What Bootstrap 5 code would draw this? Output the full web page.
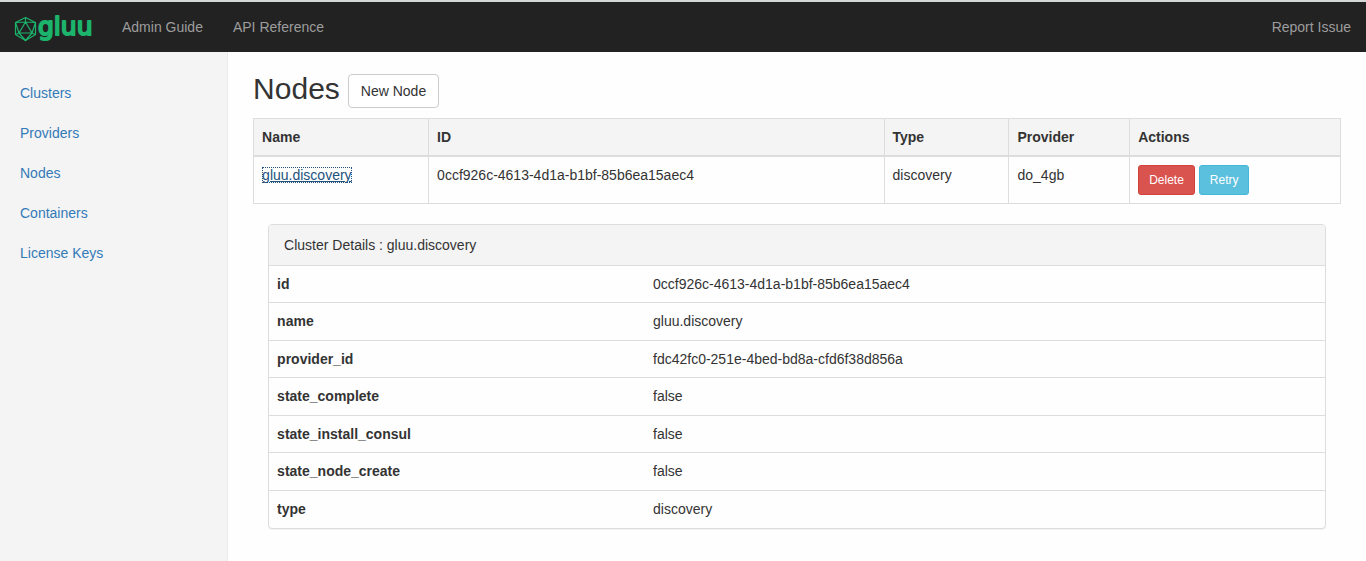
<!DOCTYPE html>
<html lang="en">
<head>
<meta charset="utf-8">
<meta name="viewport" content="width=device-width, initial-scale=1">
<title>Gluu - Nodes</title>
<link href="https://cdn.jsdelivr.net/npm/bootstrap@5.3.0/dist/css/bootstrap.min.css" rel="stylesheet">
<script src="https://cdn.jsdelivr.net/npm/bootstrap@5.3.0/dist/js/bootstrap.bundle.min.js" defer></script>
<style>
  body { font-family: "Liberation Sans", Arial, sans-serif; font-size: 14px; line-height: 20px; color: #333; background: #fefefe; }
  a { color: #337ab7; }
  .topbar { background: #222; border-top: 2px solid #d4d8d8; min-height: 52px; }
  .topbar .nav-link { color: #9d9d9d; padding: 15px; }
  .topbar .nav-link:hover { color: #fff; }
  .brand-logo { display: block; margin-left: 14px; }
  .brand-logo text { font-family: "DejaVu Sans", sans-serif; font-weight: 400; font-size: 25px; }
  .page { min-height: calc(100vh - 52px); }
  .side { width: 16.7%; background: #f4f4f4; border-right: 1px solid #eaeaea; padding-top: 21px; }
  .side .nav-link { color: #337ab7; padding: 10px 20px; }
  .content { padding: 20px 25px; min-width: 0; }
  .heading { margin-bottom: 10px; }
  h1 { font-size: 30px; line-height: 34px; font-weight: 400; }
  .btn { --bs-btn-font-size: 14px; --bs-btn-padding-y: 6px; --bs-btn-padding-x: 12px; --bs-btn-border-radius: 4px; line-height: 20px; }
  .btn-new { --bs-btn-color: #333; --bs-btn-bg: #fff; --bs-btn-border-color: #ccc; --bs-btn-hover-bg: #e6e6e6; margin-top: 2px; }
  .btn-sm { --bs-btn-font-size: 12px; --bs-btn-padding-y: 5px; --bs-btn-padding-x: 10px; --bs-btn-border-radius: 3px; line-height: 18px; }
  .btn-danger { --bs-btn-bg: #d9534f; --bs-btn-border-color: #d43f3a; }
  .btn-info { --bs-btn-color: #fff; --bs-btn-bg: #5bc0de; --bs-btn-border-color: #46b8da; --bs-btn-hover-color: #fff; }
  .table { --bs-table-color: #333; --bs-table-bg: transparent; --bs-table-border-color: #ddd; border-color: #ddd; }
  .table > :not(caption) > * > * { padding: 8px; }
  .nodes thead th { background: #f4f4f4; border-bottom-width: 2px; }
  .col-name { width: 16.1%; } .col-id { width: 41.9%; } .col-type { width: 11.5%; } .col-provider { width: 11.1%; }
  .current { color: #23527c; outline: 1px dotted #23527c; outline-offset: -1px; }
  .details { --bs-card-border-color: #ddd; --bs-card-border-radius: 4px; --bs-card-inner-border-radius: 3px; --bs-card-bg: #fefefe; margin: 20px 15px; box-shadow: 0 1px 1px rgba(0,0,0,.05); }
  .details .card-header { background: #f4f4f4; padding: 10px 15px; border-bottom: 0; }
  .details .table > tbody > tr > * { border-width: 1px 0 0; height: 37px; }
  .details .table > tbody > tr:nth-child(even) > * { height: 38px; }
  .details th { width: 35.6%; }
</style>
</head>
<body>
<nav class="topbar d-flex align-items-center" aria-label="Main">
  <a class="brand-logo" href="#" aria-label="gluu">
    <svg width="77" height="34" viewBox="0 0 77 34" overflow="visible" fill="none" stroke="#1cb46c" stroke-linejoin="round" aria-hidden="true">
      <g stroke-width="1.2">
        <path d="M11.500 7.500 21.500 12.500v12l-10 6L1.500 24.500v-12Z"/>
        <path d="M11.500 12 18 23H5ZM11.500 7.500V12M1.500 12.500l10-.5 10 .5L18 23l3.500 1.500M1.500 12.500 5 23l-3.500 1.500M5 23l6.500 7.500L18 23"/>
      </g>
      <text x="24" y="25" fill="#1cb46c" stroke-width="2">gluu</text>
    </svg>
  </a>
  <ul class="nav flex-grow-1 ms-3">
    <li class="nav-item"><a class="nav-link" href="#">Admin Guide</a></li>
    <li class="nav-item"><a class="nav-link" href="#">API Reference</a></li>
    <li class="nav-item ms-auto"><a class="nav-link" href="#">Report Issue</a></li>
  </ul>
</nav>
<div class="page d-flex">
  <aside class="side flex-shrink-0">
    <ul class="nav flex-column">
      <li><a class="nav-link" href="#">Clusters</a></li>
      <li><a class="nav-link" href="#">Providers</a></li>
      <li><a class="nav-link" href="#">Nodes</a></li>
      <li><a class="nav-link" href="#">Containers</a></li>
      <li><a class="nav-link" href="#">License Keys</a></li>
    </ul>
  </aside>
  <main class="content flex-grow-1">
    <div class="heading d-flex align-items-start gap-2">
      <h1 class="mb-0">Nodes</h1>
      <button type="button" class="btn btn-new">New Node</button>
    </div>
    <table class="table table-bordered nodes mb-0">
      <colgroup><col class="col-name"><col class="col-id"><col class="col-type"><col class="col-provider"><col></colgroup>
      <thead>
        <tr><th>Name</th><th>ID</th><th>Type</th><th>Provider</th><th>Actions</th></tr>
      </thead>
      <tbody>
        <tr>
          <td><a class="current" href="#">gluu.discovery</a></td>
          <td>0ccf926c-4613-4d1a-b1bf-85b6ea15aec4</td>
          <td>discovery</td>
          <td>do_4gb</td>
          <td><div class="d-flex gap-1"><button type="button" class="btn btn-danger btn-sm">Delete</button><button type="button" class="btn btn-info btn-sm">Retry</button></div></td>
        </tr>
      </tbody>
    </table>
    <section class="card details">
      <div class="card-header">Cluster Details : gluu.discovery</div>
      <table class="table mb-0">
        <tbody>
          <tr><th scope="row">id</th><td>0ccf926c-4613-4d1a-b1bf-85b6ea15aec4</td></tr>
          <tr><th scope="row">name</th><td>gluu.discovery</td></tr>
          <tr><th scope="row">provider_id</th><td>fdc42fc0-251e-4bed-bd8a-cfd6f38d856a</td></tr>
          <tr><th scope="row">state_complete</th><td>false</td></tr>
          <tr><th scope="row">state_install_consul</th><td>false</td></tr>
          <tr><th scope="row">state_node_create</th><td>false</td></tr>
          <tr><th scope="row">type</th><td>discovery</td></tr>
        </tbody>
      </table>
    </section>
  </main>
</div>
</body>
</html>
